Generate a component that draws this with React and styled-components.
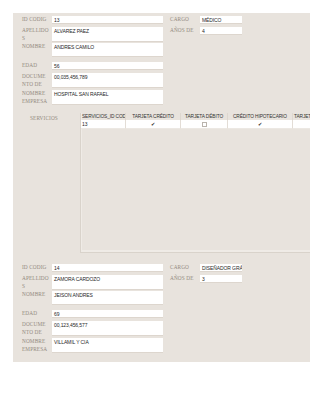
import React from "react";
import styled, { createGlobalStyle } from "styled-components";

const GlobalStyle = createGlobalStyle`
  body {
    margin: 0;
    background: #ffffff;
  }
`;

const Page = styled.div`
  padding: 13px 0 0 13px;
  width: 320px;
  height: 414px;
  box-sizing: border-box;
  overflow: hidden;
`;

const Panel = styled.div`
  width: 297px;
  background: #e8e3dd;
`;

const Record = styled.section`
  padding: 3px 0 ${p => (p.last ? 9 : 8)}px 9px;
`;

const Top = styled.div`
  display: flex;
  gap: 7px;
`;

const Column = styled.div`
  display: flex;
  flex-direction: column;
`;

const Row = styled.div`
  display: grid;
  grid-template-columns: ${p => p.labelWidth}px ${p => p.boxWidth}px;
  height: ${p => p.h}px;
  margin-top: ${p => p.gap}px;
`;

const Label = styled.div`
  font-family: "Liberation Serif", "DejaVu Serif", serif;
  font-size: 5.3px;
  line-height: 8px;
  letter-spacing: 0.1px;
  color: #938a80;
  text-transform: uppercase;
  white-space: pre-line;
  margin-top: -1px;
`;

const Box = styled.div`
  background: #ffffff;
  box-shadow: inset 0 -1px 0 #ddd6ce;
  font-family: "Liberation Sans", Arial, sans-serif;
  font-size: 5px;
  line-height: 8px;
  letter-spacing: -0.1px;
  color: #1f1f1f;
  padding-left: 2px;
  white-space: nowrap;
  overflow: hidden;
`;

const SubRow = styled.div`
  display: grid;
  grid-template-columns: 58px 230px;
  margin-top: 8px;
`;

const SubLabel = styled(Label)`
  padding-left: 8px;
  margin-top: 1px;
`;

const Subform = styled.div`
  height: 140px;
  box-sizing: border-box;
  border-left: 1px solid #d9d3cb;
  border-bottom: 1px solid #d9d3cb;
  box-shadow: inset 1px 0 0 #efebe6, inset 0 -2px 0 #efebe6;
  overflow: hidden;
`;

const Grid = styled.div`
  display: grid;
  grid-template-columns: 45px 55px 47px 65px 60px;
  width: 272px;
`;

const Head = styled.div`
  height: 7px;
  font-family: "Liberation Sans", Arial, sans-serif;
  font-size: 4.8px;
  line-height: 8px;
  letter-spacing: -0.1px;
  color: #333333;
  text-align: ${p => (p.left ? "left" : "center")};
  padding-left: ${p => (p.left ? 1 : 0)}px;
  white-space: nowrap;
  overflow: hidden;
  border-right: 1px solid #ddd7cf;
`;

const Cell = styled.div`
  height: 8px;
  background: #ffffff;
  border-right: 1px solid #e3ddd6;
  border-bottom: 1px solid #ece8e3;
  font-family: "Liberation Sans", Arial, sans-serif;
  font-size: 5px;
  line-height: 8px;
  color: #1f1f1f;
  padding-left: ${p => (p.left ? 1 : 0)}px;
  display: flex;
  align-items: center;
  justify-content: ${p => (p.left ? "flex-start" : "center")};
`;

const Check = styled.span`
  font-family: "DejaVu Sans", sans-serif;
  font-size: 5px;
  color: #2b2b2b;
`;

const Empty = styled.span`
  width: 3px;
  height: 3px;
  border: 1px solid #b9b3ac;
  background: #fff;
`;

const leftRows = [
  { label: "ID CODIG", key: "id", h: 8, gap: 0 },
  { label: "APELLIDO\nS", key: "apellidos", h: 14, gap: 3 },
  { label: "NOMBRE", key: "nombre", h: 14, gap: 2 },
  { label: "EDAD", key: "edad", h: 8, gap: 5 },
  { label: "DOCUME\nNTO DE", key: "doc", h: 14, gap: 3 },
  { label: "NOMBRE\nEMPRESA", key: "empresa", h: 15, gap: 3 }
];

const rightRows = [
  { label: "CARGO", key: "cargo", h: 8, gap: 0 },
  { label: "AÑOS DE", key: "anos", h: 8, gap: 3 }
];

const records = [
  {
    id: "13",
    apellidos: "ALVAREZ PAEZ",
    nombre: "ANDRES CAMILO",
    edad: "56",
    doc: "00,035,456,789",
    empresa: "HOSPITAL SAN RAFAEL",
    cargo: "MÉDICO",
    anos: "4",
    servicios: [{ id: "13", credito: true, debito: false, hipotecario: true }]
  },
  {
    id: "14",
    apellidos: "ZAMORA CARDOZO",
    nombre: "JEISON ANDRES",
    edad: "69",
    doc: "00,123,456,577",
    empresa: "VILLAMIL Y CIA",
    cargo: "DISEÑADOR GRÁFICO",
    anos: "3"
  }
];

const mark = on => (on ? <Check>✔</Check> : <Empty />);

function Servicios({ rows }) {
  return (
    <SubRow>
      <SubLabel>SERVICIOS</SubLabel>
      <Subform>
        <Grid>
          <Head left>SERVICIOS_ID COD</Head>
          <Head>TARJETA CRÉDITO</Head>
          <Head>TARJETA DÉBITO</Head>
          <Head>CRÉDITO HIPOTECARIO</Head>
          <Head left>TARJETA</Head>
          {rows.map(r => (
            <React.Fragment key={r.id}>
              <Cell left>{r.id}</Cell>
              <Cell>{mark(r.credito)}</Cell>
              <Cell>{mark(r.debito)}</Cell>
              <Cell>{mark(r.hipotecario)}</Cell>
              <Cell />
            </React.Fragment>
          ))}
        </Grid>
      </Subform>
    </SubRow>
  );
}

export default function App() {
  return (
    <>
      <GlobalStyle />
      <Page>
        <Panel>
          {records.map((rec, i) => (
            <Record key={rec.id} last={i === records.length - 1}>
              <Top>
                <Column>
                  {leftRows.map(r => (
                    <Row key={r.key} labelWidth={30} boxWidth={111} h={r.h} gap={r.gap}>
                      <Label>{r.label}</Label>
                      <Box>{rec[r.key]}</Box>
                    </Row>
                  ))}
                </Column>
                <Column>
                  {rightRows.map(r => (
                    <Row key={r.key} labelWidth={30} boxWidth={42} h={r.h} gap={r.gap}>
                      <Label>{r.label}</Label>
                      <Box>{rec[r.key]}</Box>
                    </Row>
                  ))}
                </Column>
              </Top>
              {rec.servicios && <Servicios rows={rec.servicios} />}
            </Record>
          ))}
        </Panel>
      </Page>
    </>
  );
}
